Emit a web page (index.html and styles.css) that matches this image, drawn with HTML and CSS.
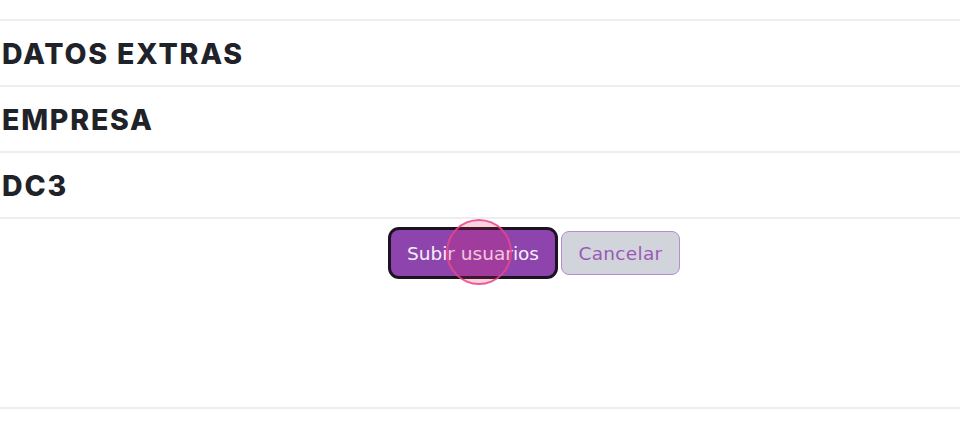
FILE: index.html
```html
<!DOCTYPE html>
<html>
<head>
	<meta charset="utf-8">
	<title>Subir usuarios</title>
	<link rel="stylesheet" href="styles.css">
</head>
<body>
	<div id="form">
		<div class="section"><h3>DATOS EXTRAS</h3></div>
		<div class="section"><h3>EMPRESA</h3></div>
		<div class="section"><h3>DC3</h3></div>

		<div class="actions">
			<a href="javascript:;" class="btn btn-primary">Subir usuarios<span class="touch"></span></a>
			<a href="javascript:;" class="btn btn-cancel">Cancelar</a>
		</div>
	</div>
</body>
</html>
```

FILE: styles.css
```css
* {
	box-sizing: border-box;
}

body {
	margin: 0;
	background: #fff;
	font-family: "DejaVu Sans", "Liberation Sans", sans-serif;
}

#form {
	padding-top: 19px;
}

.section {
	height: 66px;
	border-top: 2px solid #eeeeee;
	display: flex;
	align-items: center;
	padding: 0 0 0 2px;
}

.section h3 {
	margin: 0;
	font-family: "Inter", "DejaVu Sans", sans-serif;
	font-size: 28.5px;
	font-weight: 800;
	color: #1f2329;
	letter-spacing: 1.8px;
}

.actions {
	height: 192px;
	border-top: 2px solid #eeeeee;
	border-bottom: 2px solid #eeeeee;
	display: flex;
	align-items: flex-start;
	gap: 6px;
	padding: 11px 0 0 391px;
}

.btn {
	display: flex;
	align-items: center;
	justify-content: center;
	height: 46px;
	border-radius: 8px;
	font-size: 18.5px;
	text-decoration: none;
	position: relative;
}

.btn-primary {
	width: 164px;
	background: #8e44ad;
	color: #f6eefa;
	box-shadow: 0 0 0 3px #1b1420;
}

.btn-cancel {
	width: 119px;
	height: 44px;
	margin: 1px 0 0 0;
	background: #d1d4db;
	color: #9b59b6;
	border: 1px solid #b48ccf;
	letter-spacing: 0.3px;
}

.touch {
	position: absolute;
	left: 55px;
	top: -11px;
	width: 66px;
	height: 66px;
	border-radius: 50%;
	border: 2px solid rgba(230, 70, 140, 0.85);
	background: rgba(233, 30, 99, 0.2);
}
```
